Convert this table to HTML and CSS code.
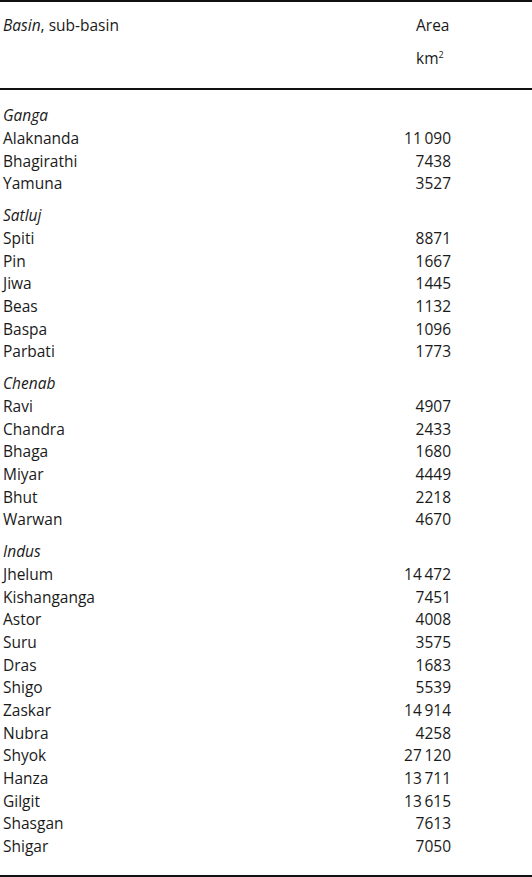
FILE: index.html
```html
<!DOCTYPE html>
<html>
<head>
<meta charset="utf-8">
<link rel="stylesheet" href="styles.css">
</head>
<body>
<table class="tbl">
  <thead>
    <tr class="head">
      <th class="c-name"><i>Basin</i>, sub-basin</th>
      <th class="c-area"><div class="h1">Area</div><div class="h2">km<sup>2</sup></div></th>
      <th class="c-pad"></th>
    </tr>
  </thead>
  <tbody>
    <tr class="grp first"><td class="c-name"><i>Ganga</i></td><td></td><td></td></tr>
    <tr><td>Alaknanda</td><td class="num">11&#8201;090</td><td></td></tr>
    <tr><td>Bhagirathi</td><td class="num">7438</td><td></td></tr>
    <tr><td>Yamuna</td><td class="num">3527</td><td></td></tr>
    <tr class="grp"><td><i>Satluj</i></td><td></td><td></td></tr>
    <tr><td>Spiti</td><td class="num">8871</td><td></td></tr>
    <tr><td>Pin</td><td class="num">1667</td><td></td></tr>
    <tr><td>Jiwa</td><td class="num">1445</td><td></td></tr>
    <tr><td>Beas</td><td class="num">1132</td><td></td></tr>
    <tr><td>Baspa</td><td class="num">1096</td><td></td></tr>
    <tr><td>Parbati</td><td class="num">1773</td><td></td></tr>
    <tr class="grp"><td><i>Chenab</i></td><td></td><td></td></tr>
    <tr><td>Ravi</td><td class="num">4907</td><td></td></tr>
    <tr><td>Chandra</td><td class="num">2433</td><td></td></tr>
    <tr><td>Bhaga</td><td class="num">1680</td><td></td></tr>
    <tr><td>Miyar</td><td class="num">4449</td><td></td></tr>
    <tr><td>Bhut</td><td class="num">2218</td><td></td></tr>
    <tr><td>Warwan</td><td class="num">4670</td><td></td></tr>
    <tr class="grp"><td><i>Indus</i></td><td></td><td></td></tr>
    <tr><td>Jhelum</td><td class="num">14&#8201;472</td><td></td></tr>
    <tr><td>Kishanganga</td><td class="num">7451</td><td></td></tr>
    <tr><td>Astor</td><td class="num">4008</td><td></td></tr>
    <tr><td>Suru</td><td class="num">3575</td><td></td></tr>
    <tr><td>Dras</td><td class="num">1683</td><td></td></tr>
    <tr><td>Shigo</td><td class="num">5539</td><td></td></tr>
    <tr><td>Zaskar</td><td class="num">14&#8201;914</td><td></td></tr>
    <tr><td>Nubra</td><td class="num">4258</td><td></td></tr>
    <tr><td>Shyok</td><td class="num">27&#8201;120</td><td></td></tr>
    <tr><td>Hanza</td><td class="num">13&#8201;711</td><td></td></tr>
    <tr><td>Gilgit</td><td class="num">13&#8201;615</td><td></td></tr>
    <tr><td>Shasgan</td><td class="num">7613</td><td></td></tr>
    <tr class="last"><td>Shigar</td><td class="num">7050</td><td></td></tr>
  </tbody>
</table>
</body>
</html>
```
FILE: styles.css
```css
html, body {
  margin: 0;
  padding: 0;
  background: #fff;
}
body {
  font-family: "Open Sans", "Noto Sans", sans-serif;
  font-size: 15.5px;
  color: #1a1a1a;
}
.tbl {
  width: 532px;
  border-collapse: collapse;
  border-top: 2px solid #111;
  border-bottom: 2px solid #111;
}
.tbl td, .tbl th {
  padding: 0;
  font-weight: normal;
  text-align: left;
  vertical-align: top;
  line-height: 22.67px;
  white-space: nowrap;
}
.tbl td:first-child, .tbl th:first-child {
  padding-left: 3px;
}
.head th {
  border-bottom: 2px solid #111;
  padding-top: 12px;
  padding-bottom: 19px;
}
.head .c-area {
  width: 35px;
  padding-left: 71px;
}
.h2 {
  margin-top: 10px;
}
.h2 sup {
  font-size: 9px;
  line-height: 0;
  vertical-align: 6px;
}
.c-pad {
  width: 81px;
}
.num {
  text-align: right !important;
}
.grp td {
  padding-top: 9.33px;
}
.grp.first td {
  padding-top: 14px;
}
.last td {
  padding-bottom: 17px;
}
```
